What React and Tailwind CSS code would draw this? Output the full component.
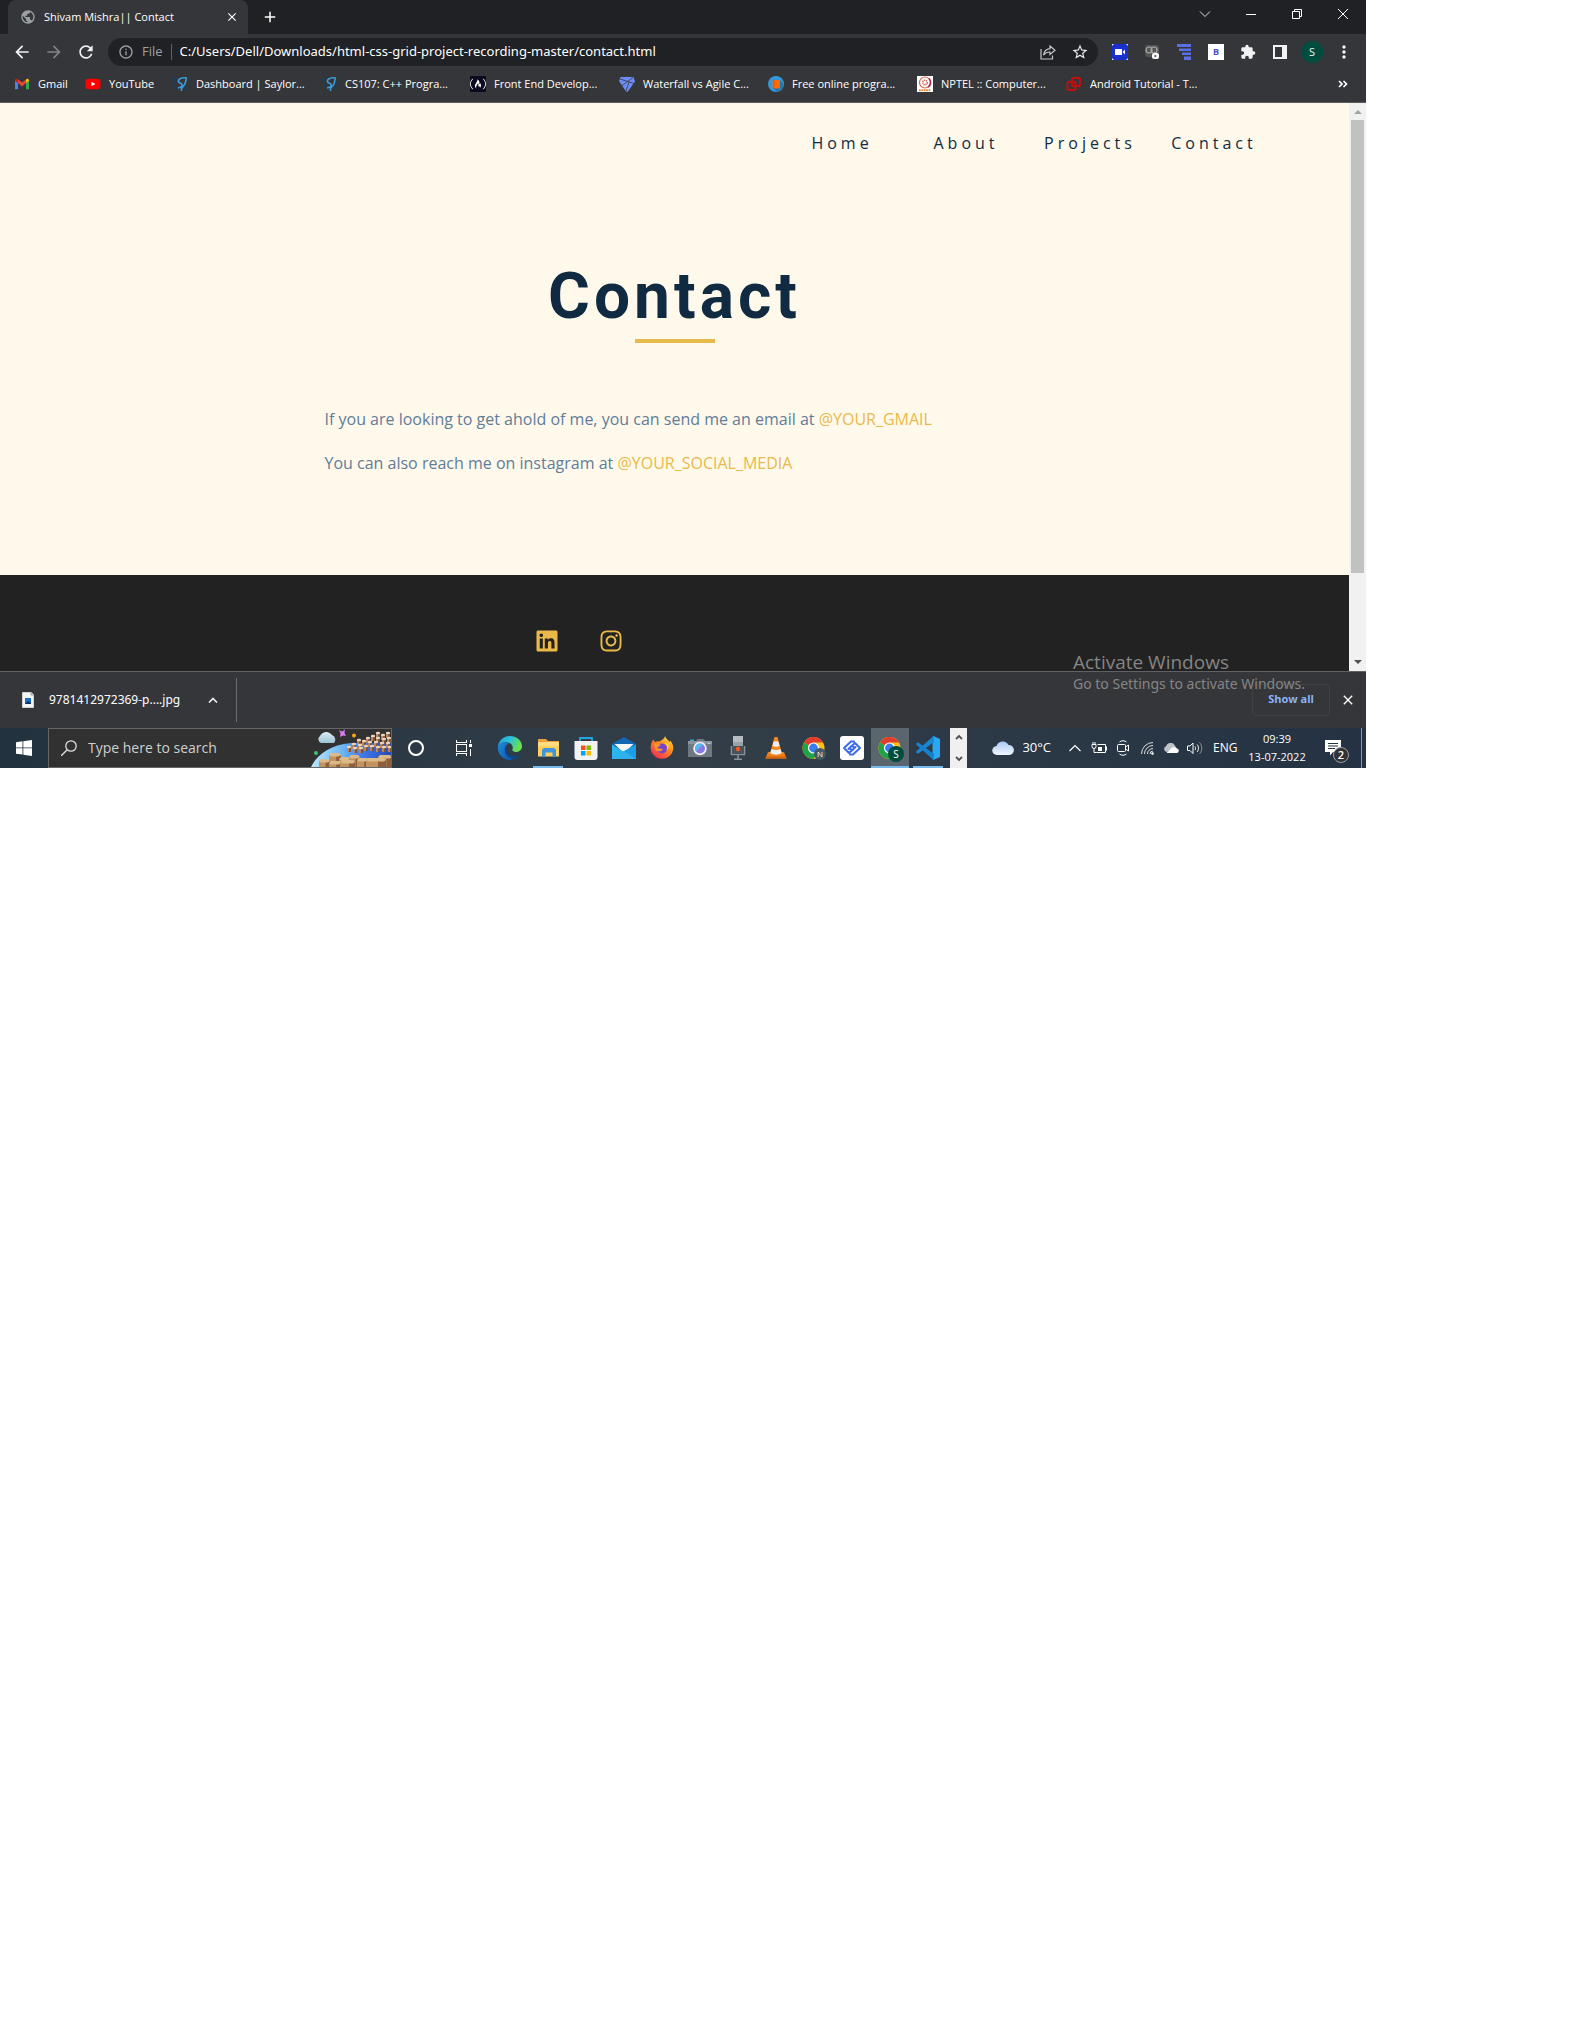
import React from "react";
import { FaYoutube, FaLinkedin, FaInstagram, FaFreeCodeCamp } from "react-icons/fa";
import {
  MdArrowBack,
  MdArrowForward,
  MdRefresh,
  MdInfoOutline,
  MdStarBorder,
  MdExtension,
  MdMoreVert,
  MdClose,
  MdAdd,
  MdPublic,
} from "react-icons/md";

/* ---------- bookmark icons ---------- */

const GmailIcon = () => (
  <svg viewBox="0 0 16 16" className="size-4">
    <path d="M1 3.8v9.4h3V7L1 4.5z" fill="#4285f4" />
    <path d="M15 3.8v9.4h-3V7l3-2.5z" fill="#34a853" />
    <path d="M4 7V3.4l4 3.2 4-3.2V7l-4 3.4z" fill="#ea4335" />
    <path d="M1 4.7C1 2.9 2.6 2.3 4 3.4V7L1 4.9z" fill="#c5221f" />
    <path d="M15 4.7c0-1.8-1.6-2.4-3-1.3V7l3-2.1z" fill="#fbbc04" />
  </svg>
);

const SaylorIcon = () => (
  <svg viewBox="0 0 16 16" className="size-4" fill="none">
    <path d="M0 2.500h5M1 3l2 2v6l2 2M12 11l2 3M15 7v7" stroke="#1d3f55" strokeWidth="1.500" />
    <path d="M15 2c-3.500-.6-7 0-8.300 2-.9 1.600 0 2.800 2 3.200 2 .5 1.500 2.800.3 3.800l-3 1M14.500 2 13 8l-3.500 4.500V15" stroke="#3d9bd8" strokeWidth="1.600" />
  </svg>
);

const DiamondIcon = () => (
  <svg viewBox="0 0 16 16" className="size-4">
    <path d="M1.500 1h13L16 5.500 8.500 16 7 15.500 0 5z" fill="#6d8cf5" />
    <path d="m1 3 14 4.500M14 1.500 3 9.500M10 6l-3 9" stroke="#35363a" strokeWidth=".8" />
  </svg>
);

const CourseIcon = () => (
  <svg viewBox="0 0 16 16" className="size-4">
    <circle cx="8" cy="8" r="8" fill="#3498db" />
    <path d="m12 4 3.500 4A8 8 0 0 1 9 15.800L5 12z" fill="#2276ab" />
    <rect x="4.500" y="4" width="7.500" height="8.500" rx="1" fill="#f9690e" />
    <path d="M6 4v8.500" stroke="#d35400" strokeWidth=".7" />
  </svg>
);

const NptelIcon = () => (
  <svg viewBox="0 0 16 16" className="size-4">
    <rect width="16" height="16" fill="#fff" />
    <circle cx="8" cy="6.500" r="5.500" fill="none" stroke="#d4694a" strokeWidth="1.200" />
    <path d="M12 2.500a5.500 5.500 0 0 1-1 8.600" fill="none" stroke="#a52a44" strokeWidth="1.600" />
    <circle cx="8" cy="6.500" r="2.200" fill="none" stroke="#c65a5a" strokeWidth="1.600" strokeDasharray="1 .7" />
    <path d="M2 14.200h12" stroke="#e08a3c" strokeWidth="2" strokeDasharray="1.800 .6" />
  </svg>
);

const SquaresIcon = () => (
  <svg viewBox="0 0 16 16" className="size-4" fill="none" stroke="#c40d0d" strokeWidth="2">
    <rect x="6" y="2" width="8" height="8" rx="1" />
    <rect x="1.500" y="6" width="8" height="8" rx="1" />
  </svg>
);

const bookmarks = [
  { label: "Gmail", icon: <GmailIcon />, width: "w-[71px]" },
  { label: "YouTube", icon: <FaYoutube className="size-4 text-[#f00]" />, width: "w-[87px]", play: true },
  { label: "Dashboard | Saylor...", icon: <SaylorIcon />, width: "w-[149px]" },
  { label: "CS107: C++ Progra...", icon: <SaylorIcon />, width: "w-[149px]" },
  {
    label: "Front End Develop...",
    icon: (
      <span className="flex size-4 items-center justify-center bg-[#0a0a23] text-white">
        <FaFreeCodeCamp className="size-4" />
      </span>
    ),
    width: "w-[149px]",
  },
  { label: "Waterfall vs Agile C...", icon: <DiamondIcon />, width: "w-[149px]" },
  { label: "Free online progra...", icon: <CourseIcon />, width: "w-[149px]" },
  { label: "NPTEL :: Computer...", icon: <NptelIcon />, width: "w-[149px]" },
  { label: "Android Tutorial - T...", icon: <SquaresIcon />, width: "w-[149px]" },
];

/* ---------- browser chrome ---------- */

function WindowButton({ label, children }) {
  return (
    <button aria-label={label} className="flex h-7 w-[46px] items-center justify-center text-white">
      {children}
    </button>
  );
}

function TabStrip() {
  return (
    <div className="flex h-[34px] bg-[#202124] pl-2">
      <div className="relative flex w-60 items-center rounded-t-lg bg-[#35363a] pl-3 pr-2">
        <MdPublic className="size-4 text-[#9aa0a6]" />
        <button className="ml-2 flex-1 whitespace-nowrap text-left text-[11px] text-white">Shivam Mishra|| Contact</button>
        <button aria-label="Close tab" className="flex size-4 items-center justify-center text-white">
          <MdClose className="size-3.5" />
        </button>
      </div>
      <button aria-label="New tab" className="ml-3 flex w-5 items-center justify-center text-white">
        <MdAdd className="size-[18px]" />
      </button>
      <div className="ml-auto flex">
        <WindowButton label="Search tabs">
          <svg viewBox="0 0 12 12" className="size-3" fill="none" stroke="#ddd"><path d="m1 3.500 5 5 5-5" /></svg>
        </WindowButton>
        <WindowButton label="Minimize">
          <svg viewBox="0 0 10 10" className="size-2.5" shapeRendering="crispEdges"><path d="M0 5h10v1H0z" fill="#fff" /></svg>
        </WindowButton>
        <WindowButton label="Restore">
          <svg viewBox="0 0 10 10" className="size-2.5" fill="none" stroke="#fff"><path d="M.5 2.500h7v7h-7zM2.500 2.500v-2h7v7h-2" /></svg>
        </WindowButton>
        <WindowButton label="Close">
          <svg viewBox="0 0 10 10" className="size-2.5" fill="none" stroke="#fff"><path d="m0 0 10 10M10 0 0 10" /></svg>
        </WindowButton>
      </div>
    </div>
  );
}

function ToolCell({ label, children }) {
  return (
    <button aria-label={label} className="flex h-7 w-8 items-center justify-center text-[#f1f3f4]">
      {children}
    </button>
  );
}

function Toolbar() {
  return (
    <div className="flex h-9 items-center pl-1.5">
      <ToolCell label="Back"><MdArrowBack className="size-5" /></ToolCell>
      <ToolCell label="Forward"><MdArrowForward className="size-5 text-[#7f8286]" /></ToolCell>
      <ToolCell label="Reload"><MdRefresh className="size-5" /></ToolCell>
      <div className="ml-1.5 mr-1.5 flex h-7 flex-1 items-center rounded-full bg-[#202124] pl-2.5 pr-0.5">
        <MdInfoOutline className="size-4 text-[#9aa0a6]" />
        <span className="ml-2 text-[13px] text-[#9aa0a6]">File</span>
        <span className="mx-2 h-4 w-px bg-[#5f6368]" />
        <input
          aria-label="Address"
          readOnly
          value="C:/Users/Dell/Downloads/html-css-grid-project-recording-master/contact.html"
          className="min-w-0 flex-1 bg-transparent font-['Noto_Sans',sans-serif] text-[13px] text-white outline-none"
        />
        <ToolCell label="Share">
          <svg viewBox="0 0 16 16" className="size-4" fill="none" stroke="#c4c7ca" strokeWidth="1.200">
            <path d="M1 5v10h11.500v-3.500M10 2l5 4.200-5 4.300V8C7 8 5 9 3.500 11.200 4 7.500 6 5 10 4.600z" />
          </svg>
        </ToolCell>
        <ToolCell label="Bookmark this page"><MdStarBorder className="size-[18px] text-[#e8eaed]" /></ToolCell>
      </div>
      <ToolCell label="Screen recorder">
        <svg viewBox="0 0 16 16" className="size-4">
          <rect width="16" height="16" fill="#fff" />
          <rect width="16" height="16" rx="3" fill="#1a2fd0" />
          <path d="M3 5h7v6H3zM10.500 8 13 5.500v5z" fill="#fff" />
        </svg>
      </ToolCell>
      <ToolCell label="Cookie manager">
        <svg viewBox="0 0 16 16" className="size-4">
          <rect x="1" y="1" width="14" height="12" rx="3" fill="#555" />
          <circle cx="5" cy="6" r="3" fill="none" stroke="#aaa" strokeWidth="1.200" />
          <circle cx="10" cy="6" r="3" fill="none" stroke="#aaa" strokeWidth="1.200" />
          <rect x="8" y="9" width="7" height="6" rx="2" fill="#fff" />
          <path d="m10.500 10.500 2.500 1.500-2.500 1.500z" fill="#555" />
        </svg>
      </ToolCell>
      <ToolCell label="Page stack">
        <svg viewBox="0 0 16 16" className="size-4" fill="#5b6fe6">
          <path d="M1 0h14v3H1zM3 4.500h12v2.500H3zM6 8.500h9V11H6zM8 12.500h7V16H8z" />
        </svg>
      </ToolCell>
      <ToolCell label="Bold extension">
        <span className="flex size-4 items-center justify-center bg-white text-[9px] font-bold text-[#4a4fd0]">B</span>
      </ToolCell>
      <ToolCell label="Extensions"><MdExtension className="size-4" /></ToolCell>
      <ToolCell label="Side panel">
        <svg viewBox="0 0 14 14" className="size-3.5">
          <path d="M0 0h14v14H0zM2 2v10h7V2z" fill="#f1f3f4" fillRule="evenodd" />
        </svg>
      </ToolCell>
      <ToolCell label="Profile">
        <span className="flex size-[22px] items-center justify-center rounded-full bg-[#004d40] text-[11px]">S</span>
      </ToolCell>
      <ToolCell label="Menu"><MdMoreVert className="size-5" /></ToolCell>
      <span className="w-1.5" />
    </div>
  );
}

function BookmarkBar() {
  return (
    <nav aria-label="Bookmarks" className="flex h-8 items-center pb-1 pl-3.5">
      {bookmarks.map((b) => (
        <a key={b.label} href="#" className={`${b.width} flex shrink-0 items-center gap-2 whitespace-nowrap text-[11px] text-white`}>
          <span className="relative">
            {b.play && <span className="absolute left-1 top-1 size-2 bg-white" />}
            <span className="relative block">{b.icon}</span>
          </span>
          {b.label}
        </a>
      ))}
      <button aria-label="More bookmarks" className="ml-auto mr-[18px] text-white">
        <svg viewBox="0 0 10 8" className="h-2 w-2.5" fill="none" stroke="currentColor" strokeWidth="1.700">
          <path d="m1 1 3 3-3 3M5.500 1l3 3-3 3" />
        </svg>
      </button>
    </nav>
  );
}

/* ---------- web page ---------- */

function ContactPage() {
  return (
    <div className="min-w-0 flex-1 font-['Open_Sans',sans-serif]">
      <main className="bg-[#fff9ec] pb-[100px]">
        <nav className="flex h-20 items-center justify-end pr-[73px]">
          <ul className="grid w-[496px] grid-cols-4 text-center text-base font-medium tracking-[4px] text-[#102a42]">
            {["Home", "About", "Projects", "Contact"].map((t) => (
              <li key={t}><a href="#">{t}</a></li>
            ))}
          </ul>
        </nav>
        <h1 className="mt-[74px] text-center font-['Roboto',sans-serif] text-[64px] font-bold leading-[80px] tracking-[4px] text-[#102a42]">
          Contact
        </h1>
        <div className="mx-auto mt-0.5 h-1 w-20 bg-[#e9b949]" />
        <div className="mx-auto mt-16 flex max-w-[700px] flex-col gap-5 text-base leading-6 text-[#617d98]">
          <p>If you are looking to get ahold of me, you can send me an email at <a href="#" className="text-[#e9b949]">@YOUR_GMAIL</a></p>
          <p>You can also reach me on instagram at <a href="#" className="text-[#e9b949]">@YOUR_SOCIAL_MEDIA</a></p>
        </div>
      </main>
      <footer className="flex h-24 items-center gap-10 bg-[#222] pl-[535px] pt-9 text-[#e9b949]">
        <a href="#" aria-label="LinkedIn"><FaLinkedin className="size-6" /></a>
        <a href="#" aria-label="Instagram"><FaInstagram className="size-6" /></a>
      </footer>
    </div>
  );
}

function Scrollbar() {
  return (
    <div className="flex w-[17px] flex-col items-center bg-[#f1f1f1]">
      <button aria-label="Scroll up" className="flex h-[17px] w-full items-center justify-center">
        <svg viewBox="0 0 8 4" className="h-1 w-2"><path d="m0 4 4-4 4 4z" fill="#a3a3a3" /></svg>
      </button>
      <div className="w-[13px] flex-1 bg-[#c1c1c1]" />
      <button aria-label="Scroll down" className="mt-20 flex h-[18px] w-full items-center justify-center">
        <svg viewBox="0 0 8 4" className="h-1 w-2"><path d="m0 0 4 4 4-4z" fill="#505050" /></svg>
      </button>
    </div>
  );
}

function DownloadShelf() {
  return (
    <div className="relative flex h-[57px] items-center border-t border-[#606164] bg-[#35363a]">
      <svg viewBox="0 0 12 16" className="ml-[22px] h-4 w-3">
        <path d="M0 0h9l3 3v13H0z" fill="#f5f5f5" stroke="#999" strokeWidth=".7" />
        <path d="M9 0v3h3" fill="#ccc" stroke="#888" strokeWidth=".7" />
        <path d="M3 6h6v6H3z" fill="#1f6fc4" />
        <path d="m3 12 3-3 3 2v1z" fill="#0c2f66" />
      </svg>
      <button className="ml-[15px] w-[140px] text-left font-['Noto_Sans',sans-serif] text-xs text-white">9781412972369-p....jpg</button>
      <button aria-label="Download options" className="ml-[19px]">
        <svg viewBox="0 0 10 6" className="h-1.5 w-2.5" fill="none" stroke="#e8eaed" strokeWidth="1.700"><path d="m1 5.500 4-4 4 4" /></svg>
      </button>
      <span className="ml-[18px] h-11 w-px bg-[#6b6c70]" />
      <button className="ml-auto h-8 w-[78px] rounded border border-[#404145] pb-0.5 text-[11px] font-bold text-[#8ab4f8]">Show all</button>
      <button aria-label="Close downloads" className="ml-2.5 mr-2.5 text-white"><MdClose className="size-4" /></button>
      <div className="pointer-events-none absolute -top-[22px] right-14 w-[237px] whitespace-nowrap text-[#858585]">
        <p className="text-[19px] leading-6">Activate Windows</p>
        <p className="font-['Noto_Sans',sans-serif] text-[14px] leading-5">Go to Settings to activate Windows.</p>
      </div>
    </div>
  );
}

/* ---------- taskbar ---------- */

const EdgeIcon = () => (
  <svg viewBox="0 0 24 24" className="size-6">
    <defs>
      <linearGradient id="edgeTop" x1="0" y1="0" x2="1" y2=".4">
        <stop offset="0" stopColor="#1f9fe0" /><stop offset=".5" stopColor="#2cc0d8" /><stop offset="1" stopColor="#6be04e" />
      </linearGradient>
      <linearGradient id="edgeLow" x1="0" y1="0" x2="1" y2="1">
        <stop offset="0" stopColor="#1b8bdc" /><stop offset="1" stopColor="#0c4fa5" />
      </linearGradient>
    </defs>
    <path d="M12 0C5.500 0 .8 4.500 0 10.500 2 7 6 5.500 10 6.500c4 1 5.500 4 4.500 6.500-.7 1.800.8 3 3 3 3.500 0 6.500-2 6.500-5.500C24 4.500 18.500 0 12 0z" fill="url(#edgeTop)" />
    <path d="M0 11C1 6.500 7 5 11 7.500 8 8.500 6.500 11 6.800 14.500c.4 4.500 5 8 10 7.500C14.500 23.500 13 24 11.500 24 5 24-.7 18 0 11z" fill="url(#edgeLow)" />
    <path d="M9 12c-1.500 5 3 9.500 9 8 2-.5 3.800-1.700 4.500-2.500.3.500-1.500 3.500-5 4.700C12 23.500 7 20 7 15c0-1.500.8-2.700 2-3z" fill="#0b4590" />
  </svg>
);

const ExplorerIcon = () => (
  <svg viewBox="0 0 24 24" className="size-6">
    <path d="M2 3h8l2 2h11v4H2z" fill="#e8a33d" />
    <path d="M2 6h21v14.500H2z" fill="#ffd15c" />
    <path d="M2 6h21v4H2z" fill="#ffdc80" />
    <path d="M6 13.500 8 12h10l2 1.500V21h-3.500v-4.500h-7V21H6z" fill="#3f96dd" />
  </svg>
);

const StoreIcon = () => (
  <svg viewBox="0 0 24 24" className="size-6">
    <path d="M6 6V2h12v4" fill="none" stroke="#1fa7e8" strokeWidth="1.800" />
    <path d="M.5 5h23v16a3 3 0 0 1-3 3h-17a3 3 0 0 1-3-3z" fill="#f3f3f3" />
    <path d="M7 9.500h4.500V14H7z" fill="#f25022" /><path d="M12.500 9.500H17V14h-4.500z" fill="#7fba00" />
    <path d="M7 15h4.500v4.500H7z" fill="#00a4ef" /><path d="M12.500 15H17v4.500h-4.500z" fill="#ffb900" />
  </svg>
);

const MailIcon = () => (
  <svg viewBox="0 0 24 24" className="size-6">
    <path d="M0 8 12 1l12 7v4H0z" fill="#1368b5" />
    <path d="M2.500 8h19l-8 8h-3z" fill="#f4f8fc" />
    <path d="M0 8.500 12 16 24 8.500V23H0z" fill="#2cb4f0" />
    <path d="m0 23 12-8 12-6.500V23z" fill="#1c9ee6" />
    <path d="M12 15 24 23H0z" fill="#38c0f5" opacity=".6" />
  </svg>
);

const FirefoxIcon = () => (
  <svg viewBox="0 0 24 24" className="size-6">
    <defs>
      <linearGradient id="fox" x1=".9" y1="0" x2=".2" y2="1">
        <stop offset="0" stopColor="#ffe94a" /><stop offset=".45" stopColor="#ff8a1c" /><stop offset="1" stopColor="#f0285e" />
      </linearGradient>
    </defs>
    <path d="M15 0c1 3 3.500 4 5 6 .2-.5 0-1 0-1.500 2 2 3.300 4.500 3.300 7.500A11.300 11.300 0 1 1 1 9c.3-2.500 1.500-4 2-5.500L5 6c2-1 3.500-.8 4.500-.5C11.500 4 14.500 3 15 0z" fill="url(#fox)" />
    <circle cx="12" cy="12.500" r="5" fill="#7542d6" />
    <path d="M4 8c2.500-1 5-.5 7 1.500-1.500.5-3 .7-3.500 2 1 2 4 1 5.500 1.500-2 3.500-6.500 2.500-8 0z" fill="#ff9422" />
    <path d="M14 7c3 1 4 4 2.500 7 2-1 3.500-4 1-7.500z" fill="#ffcf36" />
  </svg>
);

const CameraIcon = () => (
  <svg viewBox="0 0 24 24" className="size-6">
    <path d="M2 3.500h4v2H2z" fill="#31a8e0" />
    <path d="M8 5l1.500-2h6L17 5h7v16H0V5z" fill="#6f7880" />
    <path d="M0 5h24v3H0z" fill="#8d969e" />
    <circle cx="12" cy="12.500" r="6.700" fill="#eef1f5" />
    <circle cx="12" cy="12.500" r="5" fill="#8b78e8" />
    <path d="M7 12.500a5 5 0 0 1 8-4l-7 7z" fill="#58b9f0" />
    <circle cx="21" cy="7.500" r=".8" fill="#e6e6e6" />
  </svg>
);

const MicIcon = () => (
  <svg viewBox="0 0 24 24" className="size-6">
    <path d="M7 0h10v17H7z" fill="#9aa1a8" />
    <path d="M7 0h10v6H7z" fill="#b7bcc1" />
    <path d="M5.500 10v8.500h13V10M12 19v4M8 23.200h8" fill="none" stroke="#88919a" strokeWidth="1.600" />
    <path d="M7 10h10v7H7z" fill="#4c525a" />
    <circle cx="12" cy="13" r="2.300" fill="#f25a1d" />
  </svg>
);

const VlcIcon = () => (
  <svg viewBox="0 0 24 24" className="size-6">
    <path d="M4 16h16l2.500 6.500h-21z" fill="#ef7f1a" />
    <path d="M10.500 1h3L18 17.500c-3 2.500-9 2.500-12 0z" fill="#f58a1f" />
    <path d="M9.500 5.500h5l1 4.500c-2 1-5 1-7 0zM7.500 13c2.500 1.200 6.500 1.200 9 0l1.200 4c-3 2.300-8.400 2.300-11.400 0z" fill="#eceff1" />
    <path d="M1.500 22.500 2 20.500h20l.5 2z" fill="#d96508" />
  </svg>
);

function ChromeIcon({ letter, tone }) {
  return (
    <span className="relative block size-6">
      <svg viewBox="0 0 24 24" className="size-6">
        <circle cx="11.500" cy="12" r="11" fill="#fbc116" />
        <path d="M11.500 12 2 6.500A11 11 0 0 1 21 6.500h-9.500z" fill="#e33b2e" />
        <path d="M11.500 12 2 6.500A11 11 0 0 0 11.500 23l4.800-8.300z" fill="#1ea446" />
        <circle cx="11.500" cy="12" r="5.600" fill="#fff" />
        <circle cx="11.500" cy="12" r="4.400" fill="#3b7ded" />
      </svg>
      <span className={`absolute flex items-center justify-center rounded-full text-white ${tone}`}>{letter}</span>
    </span>
  );
}

const LinkAppIcon = () => (
  <svg viewBox="0 0 24 24" className="size-6">
    <rect width="24" height="24" rx="3" fill="#fff" />
    <path
      d="M14 5.500h-3L4 12l5 5 5.500-5-2.500-2.500L8.500 13M10 18.500h3l7-6.500-5-5-5.500 5 2.500 2.500 3.500-3.500"
      fill="none"
      stroke="#3c6df0"
      strokeWidth="2"
      strokeLinejoin="round"
      strokeLinecap="round"
    />
  </svg>
);

const VsCodeIcon = () => (
  <svg viewBox="0 0 24 24" className="size-6">
    <path d="M17.500 0 24 3v18l-6.500 3-1-1V1z" fill="#2aa7f2" />
    <path d="M17.500 0 .3 15.300v1.400l1.700 1.100L18 6z" fill="#1789d4" />
    <path d="M17.500 24 .3 8.700V7.300L2 6.200 18 18z" fill="#1580cc" />
  </svg>
);

const apps = [
  { label: "Edge", icon: <EdgeIcon /> },
  { label: "File Explorer", icon: <ExplorerIcon />, open: true },
  { label: "Store", icon: <StoreIcon /> },
  { label: "Mail", icon: <MailIcon /> },
  { label: "Firefox", icon: <FirefoxIcon /> },
  { label: "Camera", icon: <CameraIcon /> },
  { label: "Voice Recorder", icon: <MicIcon /> },
  { label: "VLC", icon: <VlcIcon /> },
  { label: "Chrome N", icon: <ChromeIcon letter="N" tone="left-3 top-3 size-3 bg-[#455a64] text-[8px]" /> },
  { label: "Link app", icon: <LinkAppIcon /> },
  { label: "Chrome S", icon: <ChromeIcon letter="S" tone="left-2.5 top-2.5 size-4 bg-[#004d40] text-[10px]" />, active: true },
  { label: "VS Code", icon: <VsCodeIcon />, open: true },
];

function SearchArt() {
  const far = [[67, 4], [72, 6], [77, 4], [62, 7], [57, 9], [67, 9], [73, 10], [78, 9], [53, 12], [48, 11], [59, 13], [65, 13], [71, 14], [77, 14], [43, 15], [49, 16], [38, 18], [55, 17], [61, 17], [67, 18], [73, 18], [79, 18], [44, 19], [50, 19]];
  const near = [[18, 26, 12], [38, 28, 11], [28, 30, 11], [67, 28, 14], [46, 31, 12], [8, 32, 11], [18, 34, 12], [29, 33, 15], [55, 31, 20]];
  return (
    <svg viewBox="0 0 80 38" className="h-[38px] w-20 shrink-0">
      <defs>
        <linearGradient id="sea" x1="0" y1="0" x2="1" y2="0">
          <stop offset="0" stopColor="#b9e8fc" /><stop offset=".4" stopColor="#6cb5f2" /><stop offset=".65" stopColor="#3f78ea" /><stop offset="1" stopColor="#244bb5" />
        </linearGradient>
        <linearGradient id="artCloud" x1="0" y1="0" x2="0" y2="1">
          <stop offset="0" stopColor="#dcecf4" /><stop offset="1" stopColor="#9cc3d6" />
        </linearGradient>
      </defs>
      <path d="M0 38C6 26 18 16 40 14h40v24z" fill="url(#sea)" />
      <path d="M10 14a4 4 0 0 1-1-7 7 7 0 0 1 12-1 5 5 0 0 1 2 8z" fill="url(#artCloud)" />
      <path d="m28 1 3 1.500L34 .5l-.5 3.500 1.500 3-3-.5-3 1.500.5-3.500z" fill="#d77bf0" />
      <circle cx="43" cy="6.500" r="2" fill="#f5a70a" />
      <circle cx="5" cy="24" r="2" fill="#3cc46a" />
      {far.map(([x, y], i) => (
        <g key={i}>
          <path d={`M${x - 2} ${y}v5h4v-5z`} fill="#b58660" />
          <path d={`M${x} ${y}v5h2v-5z`} fill="#7c523a" />
          <ellipse cx={x} cy={y} rx="2.200" ry="1.200" fill="#ecd5bd" />
        </g>
      ))}
      {near.map(([x, y, w], i) => (
        <g key={i}>
          <path d={`M${x} ${y}h${w}v12h-${w}z`} fill="#c0935f" />
          <path d={`M${x + w * 0.6} ${y}h${w * 0.4}v12h-${w * 0.4}z`} fill="#8d5f3d" />
          <path d={`M${x} ${y}l2-2h${w - 4}l2 2-2 1.500h-${w - 4}z`} fill="#dcb989" />
        </g>
      ))}
    </svg>
  );
}

function Tray({ label, children }) {
  return <button aria-label={label} className="flex h-10 w-6 items-center justify-center">{children}</button>;
}

function Taskbar() {
  return (
    <div className="flex h-10 items-stretch bg-linear-to-r from-[#22323e] via-[#333e48] to-[#243243] text-white">
      <button aria-label="Start" className="flex w-12 items-center justify-center">
        <svg viewBox="0 0 16 16" className="size-4" fill="#fff">
          <path d="M0 2.200 6.500 1.300v6.200H0zM7.300 1.200 16 0v7.500H7.300zM0 8.300h6.500v6.300L0 13.700zM7.300 8.300H16V16l-8.700-1.200z" />
        </svg>
      </button>
      <label className="flex w-[344px] items-center overflow-hidden border border-[#666] bg-[#313131] pl-3">
        <svg viewBox="0 0 16 16" className="size-4" fill="none" stroke="#e0e0e0" strokeWidth="1.300">
          <circle cx="10" cy="6" r="5.200" /><path d="M6.200 9.800 0 16" />
        </svg>
        <input aria-label="Search" placeholder="Type here to search" className="ml-[11px] min-w-0 flex-1 bg-transparent text-sm outline-none placeholder:text-[#cfcfcf]" />
        <SearchArt />
      </label>
      <button aria-label="Cortana" className="flex w-12 items-center justify-center">
        <span className="size-4 rounded-full border-2 border-white" />
      </button>
      <button aria-label="Task view" className="flex w-12 items-center justify-center">
        <svg viewBox="0 0 16 16" className="size-4" fill="none" stroke="#fff" shapeRendering="crispEdges">
          <path d="M.5 0v2.500h10V0M.5 4.500h10v7H.5zM.5 16v-2.500h10V16M14.500 0v3M14.500 9v7" />
          <path d="M13 4h3v3h-3z" fill="#fff" stroke="none" />
        </svg>
      </button>
      <div className="ml-[3px] flex">
        {apps.map((a) => (
          <button
            key={a.label}
            aria-label={a.label}
            className={a.active ? "relative flex w-[38px] items-center justify-center bg-[#5b656e]" : "relative flex w-[38px] items-center justify-center"}
          >
            {a.icon}
            {a.open && <span className="absolute inset-x-1 bottom-0 h-0.5 bg-[#76b9ed]" />}
            {a.active && <span className="absolute inset-x-0 bottom-0 h-0.5 bg-[#76b9ed]" />}
          </button>
        ))}
      </div>
      <div className="ml-[3px] flex w-[17px] flex-col items-center justify-between bg-[#f0f0f0] py-1.5">
        {["m1 5 3-3 3 3", "m1 1 3 3 3-3"].map((d, i) => (
          <button key={d} aria-label={i ? "Scroll down" : "Scroll up"}>
            <svg viewBox="0 0 8 6" className="h-1.5 w-2" fill="none" stroke="#505050" strokeWidth="1.800"><path d={d} /></svg>
          </button>
        ))}
      </div>
      <div className="ml-auto flex items-center">
        <button className="mr-3 flex items-center gap-2 text-[13px]">
          <svg viewBox="0 0 22 16" className="h-4 w-[22px]">
            <defs>
              <linearGradient id="sky" x1="0" y1="0" x2="0" y2="1">
                <stop offset="0" stopColor="#a9c8f5" /><stop offset="1" stopColor="#f2f7ff" />
              </linearGradient>
            </defs>
            <path d="M5 15a4.500 4.500 0 0 1-.5-9A6.500 6.500 0 0 1 16.500 5a5 5 0 0 1 .8 10z" fill="url(#sky)" />
          </svg>
          30°C
        </button>
        <Tray label="Show hidden icons">
          <svg viewBox="0 0 12 8" className="h-2 w-3" fill="none" stroke="#fff" strokeWidth="1.200"><path d="m.5 7 5.500-5.500L11.500 7" /></svg>
        </Tray>
        <Tray label="Battery">
          <svg viewBox="0 0 16 12" className="h-3 w-4" fill="none" stroke="#fff">
            <path d="M6.500 2.500h8v8h-9M1 2.500h4v2a2 2 0 0 1-4 0zM2 0v2.500M4 0v2.500M3 6.500v4h2.500M15.500 4.500v4" />
            <path d="M7 5h4v4H7z" fill="#fff" stroke="none" />
          </svg>
        </Tray>
        <Tray label="Meet now">
          <svg viewBox="0 0 12 16" className="h-4 w-3" fill="none" stroke="#fff">
            <rect x=".5" y="4.500" width="8" height="7" rx="1" /><path d="m8.500 7 3-2v6l-3-2M2.500 2C4.500.3 7.500.3 9.500 2M2.500 14c2 1.700 5 1.700 7 0" />
          </svg>
        </Tray>
        <Tray label="Network">
          <svg viewBox="0 0 14 14" className="size-3.5" fill="none" stroke="#ddd">
            <path d="M1.500 13A11.500 11.500 0 0 1 13 1.500M4.500 13A8.500 8.500 0 0 1 13 4.500M7.500 13A5.500 5.500 0 0 1 13 7.500M10 13a3 3 0 0 1 3-3" />
            <circle cx="12.500" cy="12.500" r="1" fill="#fff" />
          </svg>
        </Tray>
        <Tray label="OneDrive">
          <svg viewBox="0 0 16 10" className="h-2.5 w-4">
            <path d="M3.500 9A3 3 0 0 1 3 3.300 4.700 4.700 0 0 1 11.500 2L14 6z" fill="#bfc3c8" />
            <path d="M3.500 10 8 5.500a4 4 0 0 1 6 0A2.300 2.300 0 0 1 14 10z" fill="#fff" />
          </svg>
        </Tray>
        <Tray label="Volume">
          <svg viewBox="0 0 16 14" className="h-3.5 w-4" fill="none" stroke="#fff">
            <path d="M.5 5v4.500h2.500l3 3V2L3 5zM8 5.500c.8 1 .8 2.500 0 3.500M10 3.500c2 2 2 5.500 0 7.500" />
            <path d="M12.500 1.500c3 3 3 8.500 0 11.500" stroke="#8d949b" />
          </svg>
        </Tray>
        <button className="ml-1.5 w-8 text-left text-xs">ENG</button>
        <button className="flex w-16 flex-col items-center text-[11px] leading-[18px]">
          <span>09:39</span>
          <span>13-07-2022</span>
        </button>
        <button aria-label="Notifications" className="relative ml-4 mr-2 h-10 w-7">
          <svg viewBox="0 0 16 16" className="h-4 w-4">
            <path d="M0 0h16v12H8l-3 3.500V12H0z" fill="#fff" /><path d="M3 3.500h10M3 6h10M3 8.500h7" stroke="#263342" />
          </svg>
          <span className="absolute left-2 top-[19px] flex size-4 items-center justify-center rounded-full border border-[#9a9fa5] bg-[#333] text-[11px] font-semibold">2</span>
        </button>
        <span className="mr-1 h-full w-px bg-[#8b939b]" />
      </div>
    </div>
  );
}

export default function App() {
  return (
    <div className="min-h-screen bg-white">
      <div className="w-full max-w-[1366px] overflow-hidden font-['Open_Sans',sans-serif]">
        <TabStrip />
        <div className="border-b border-[#5c5d61] bg-[#35363a]">
          <Toolbar />
          <BookmarkBar />
        </div>
        <div className="flex">
          <ContactPage />
          <Scrollbar />
        </div>
        <DownloadShelf />
        <Taskbar />
      </div>
    </div>
  );
}
